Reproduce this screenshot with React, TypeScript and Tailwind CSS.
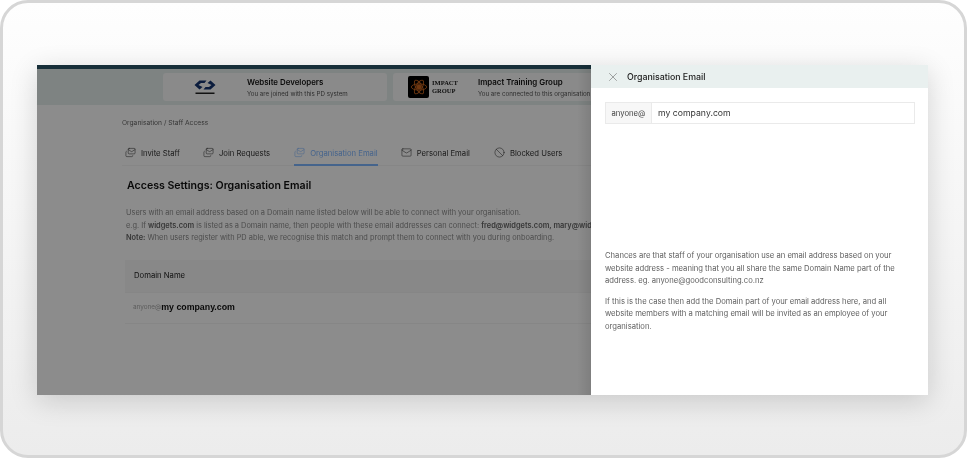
import { Ban, Mail, Mails, X } from "lucide-react";

const tabs = [
  { label: "Invite Staff", icon: Mails, gap: "mr-[23px]" },
  { label: "Join Requests", icon: Mails, gap: "mr-[24px]" },
  { label: "Organisation Email", icon: Mails, gap: "mr-[23px]", active: true },
  { label: "Personal Email", icon: Mail, gap: "mr-[24px]" },
  { label: "Blocked Users", icon: Ban, gap: "" },
];

function WebsiteLogo() {
  return (
    <svg viewBox="0 0 44 30" className="w-[22px] h-[15px]">
      <path d="M25 1 L11 1 L1 10 L11 19 L17 14 L9 10 L14 6 L21 6 Z" fill="#14346f" />
      <path d="M19 19 L33 19 L43 10 L33 1 L27 6 L35 10 L30 14 L23 14 Z" fill="#14346f" />
      <rect x="3" y="25" width="38" height="3" fill="#222" />
    </svg>
  );
}

function ImpactLogo() {
  return (
    <div className="flex items-center gap-[3px]">
      <div className="w-[21px] h-[22px] rounded-[2px] bg-black flex items-center justify-center">
        <svg viewBox="0 0 20 20" className="w-[18px] h-[18px]" fill="none" stroke="#c9651f" strokeWidth="1">
          <ellipse cx="10" cy="10" rx="8.5" ry="3.5" />
          <ellipse cx="10" cy="10" rx="8.5" ry="3.5" transform="rotate(60 10 10)" />
          <ellipse cx="10" cy="10" rx="8.5" ry="3.5" transform="rotate(120 10 10)" />
          <circle cx="10" cy="10" r="2.5" fill="#c9651f" />
        </svg>
      </div>
      <div className="font-['Liberation_Serif',serif] font-bold text-[6.5px] leading-[8.5px] text-[#1a1a1a]">
        IMPACT
        <br />
        GROUP
      </div>
    </div>
  );
}

function OrgCard({ logo, name, sub, wide }: { logo: React.ReactNode; name: string; sub: string; wide?: boolean }) {
  return (
    <div className={`h-[28px] shrink-0 rounded-[3px] bg-[#fbfbfb] flex items-center ${wide ? "w-[224px] pl-[15px]" : "w-[224px] pl-[31px]"}`}>
      <div className={wide ? "w-[70px]" : "w-[53px]"}>{logo}</div>
      <div>
        <div className="text-[7.9px] leading-[11px] font-semibold text-[#111] whitespace-nowrap">{name}</div>
        <div className="text-[6.2px] leading-[9px] mt-[1px] text-[#555] whitespace-nowrap">{sub}</div>
      </div>
    </div>
  );
}

export default function App() {
  return (
    <div className="h-[458px] w-[967px] overflow-hidden rounded-[28px] border-[3px] border-[#d6d6d6] bg-gradient-to-b from-[#fefefe] to-[#ececec] pl-[34px] pt-[62px] font-['Inter',sans-serif]">
      <div className="flex h-[330px] w-[891px] overflow-hidden shadow-[0_6px_26px_rgba(0,0,0,0.16)] blur-[0.45px]">
        {/* page behind the drawer */}
        <div className="relative w-[554px] shrink-0 overflow-hidden bg-white">
          <div className="h-[4px] bg-[#2a5769]" />
          <div className="flex h-[36px] items-center gap-[6px] bg-[#e6efed] pl-[126px]">
            <OrgCard logo={<WebsiteLogo />} name="Website Developers" sub="You are joined with this PD system" />
            <OrgCard wide logo={<ImpactLogo />} name="Impact Training Group" sub="You are connected to this organisation" />
          </div>

          <div className="pl-[85px] pt-[13px]">
            <div className="text-[6.7px] leading-[10px] text-[#666]">Organisation / Staff Access</div>

            <div className="mt-[15px] flex h-[23px] items-start border-b border-[#f4f4f4] pl-[3px]">
              {tabs.map((t) => (
                <div
                  key={t.label}
                  className={`flex h-[23px] items-start gap-[5px] pt-[5px] ${t.gap} ${t.active ? "border-b-2 border-[#7fb6ff] text-[#7fb6ff]" : "text-[#333]"}`}
                >
                  <t.icon className="-mt-[1px] h-[11px] w-[11px]" strokeWidth={1.2} />
                  <span className="text-[7.7px] leading-[11px] whitespace-nowrap">{t.label}</span>
                </div>
              ))}
            </div>

            <h1 className="ml-[5px] mt-[12px] text-[10.6px] leading-[16px] font-semibold text-[#111] whitespace-nowrap">
              Access Settings: Organisation Email
            </h1>

            <div className="ml-[4px] mt-[13px] text-[7.4px] leading-[12.5px] text-[#8c8c8c] whitespace-nowrap">
              <p>Users with an email address based on a Domain name listed below will be able to connect with your organisation.</p>
              <p>
                e.g. If <b className="font-semibold text-[#666]">widgets.com</b> is listed as a Domain name, then people with these email addresses can connect:{" "}
                <b className="font-semibold text-[#666]">fred@widgets.com, mary@widgets.com</b>
              </p>
              <p>
                <b className="font-semibold text-[#666]">Note:</b> When users register with PD able, we recognise this match and prompt them to connect with you during onboarding.
              </p>
            </div>

            <div className="ml-[3px] mt-[15px]">
              <div className="flex h-[32px] items-center bg-[#f8f8f8] pl-[9px] text-[7.7px] text-[#222]">Domain Name</div>
              <div className="flex h-[32px] items-center border-y border-[#f4f4f4] pl-[8px]">
                <span className="text-[6.4px] text-[#aaa]">anyone@</span>
                <span className="text-[8.8px] font-semibold font-['Liberation_Sans',sans-serif] text-[#111]">my company.com</span>
              </div>
            </div>
          </div>

          {/* dim overlay */}
          <div className="absolute inset-0 bg-black/45" />
          <div className="absolute inset-y-0 right-0 w-[14px] bg-gradient-to-r from-transparent to-black/10" />
        </div>

        {/* drawer */}
        <div className="w-[337px] shrink-0 bg-white">
          <div className="flex h-[23px] items-center bg-[#e9f0ef] pl-[15px]">
            <X className="h-[14px] w-[14px] text-[#666]" strokeWidth={1} />
            <span className="ml-[7px] text-[8.8px] font-medium text-[#222]">Organisation Email</span>
          </div>

          <div className="ml-[14px] mt-[14px] flex h-[22px] w-[310px] border border-[#eaeaea]">
            <div className="flex w-[46px] items-center justify-center border-r border-[#eaeaea] bg-[#f7f7f7] pt-[1px] text-[7.7px] text-[#444]">anyone@</div>
            <div className="flex flex-1 items-center pl-[6px] pt-[1px] text-[8.7px] text-[#333]">my company.com</div>
          </div>

          <div className="ml-[14px] mt-[126px] w-[296px] text-[7.65px] leading-[12.5px] text-[#5f5f5f]">
            <p>
              Chances are that staff of your organisation use an email address based on your website address - meaning that you all share the same Domain Name part of the address. eg. anyone@goodconsulting.co.nz
            </p>
            <p className="mt-[8px]">
              If this is the case then add the Domain part of your email address here, and all website members with a matching email will be invited as an employee of your organisation.
            </p>
          </div>
        </div>
      </div>
    </div>
  );
}
